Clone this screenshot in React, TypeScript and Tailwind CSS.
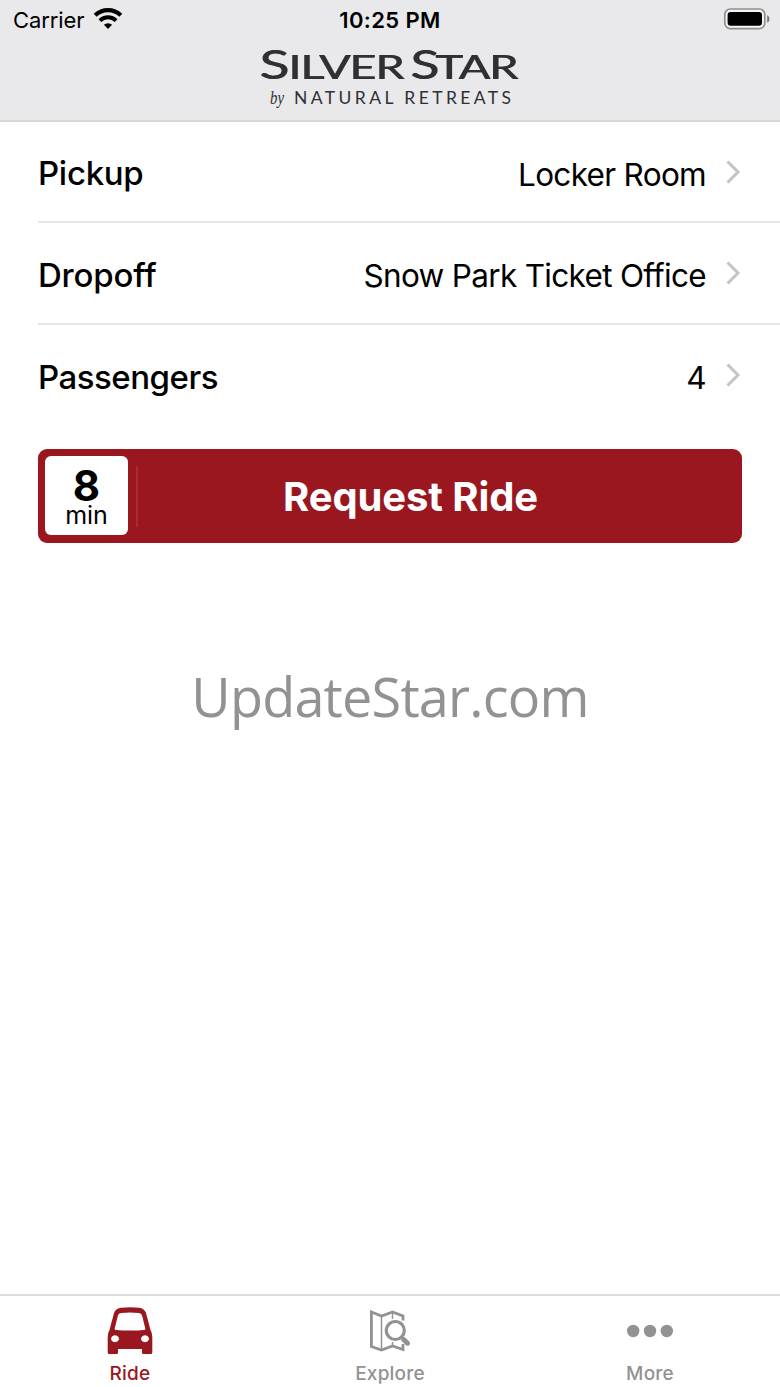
import React, { useState } from 'react';

const rows = [
  { label: 'Pickup', value: 'Locker Room', rowClass: 'h-[101px] border-[#e6e6e7]', labelClass: 'tracking-[-0.3px]' },
  { label: 'Dropoff', value: 'Snow Park Ticket Office', rowClass: 'h-[102px] border-[#e6e6e7]', labelClass: 'tracking-[-0.2px]' },
  { label: 'Passengers', value: '4', rowClass: 'h-[102px] border-transparent', labelClass: 'tracking-[-0.5px]' },
];

const WifiIcon = () => (
  <svg className="mb-[3px] ml-[9px] h-[22px] w-[30px]" viewBox="0 0 30 22" fill="none" stroke="#000">
    <path d="M2.200 7.300A18.500 18.500 0 0 1 27.800 7.300" strokeWidth="4.200" />
    <path d="M6.900 12.600A11.500 11.500 0 0 1 23.100 12.600" strokeWidth="4" />
    <path d="M10.900 16.800a6 6 0 0 1 8.200 0L15 21z" fill="#000" stroke="none" />
  </svg>
);

const BatteryIcon = () => (
  <svg className="h-[22px] w-[48px]" viewBox="0 0 48 22">
    <rect x="1.800" y="1" width="40" height="19.600" rx="5.500" fill="#f4f4f5" stroke="#8e8e90" strokeWidth="1.700" />
    <rect x="4.600" y="4" width="34.400" height="13.800" rx="3" fill="#000" />
    <path d="M44.200 7.200c3 .8 3 6.600 0 7.400z" fill="#77777a" />
  </svg>
);

const Logo = () => (
  <svg className="h-[72px] w-[270px]" viewBox="0 0 270 72" fill="#303034" fontFamily="Lato, sans-serif">
    <g className="[filter:drop-shadow(1.4px_0_0_#303034)]" letterSpacing="-0.8">
      <text x="4" y="38" fontSize="40" textLength="29" lengthAdjust="spacingAndGlyphs">S</text>
      <text x="33" y="38" fontSize="33" textLength="115" lengthAdjust="spacingAndGlyphs">ILVER</text>
      <text x="155" y="38" fontSize="40" textLength="28" lengthAdjust="spacingAndGlyphs">S</text>
      <text x="180" y="38" fontSize="33" textLength="82" lengthAdjust="spacingAndGlyphs">TAR</text>
    </g>
    <text x="15" y="62.5" fontSize="18" fontStyle="italic" fontFamily="Liberation Serif, serif" textLength="14" lengthAdjust="spacingAndGlyphs">by</text>
    <text x="39" y="62.500" fontSize="17.500" textLength="217">NATURAL RETREATS</text>
  </svg>
);

const CarIcon = () => (
  <svg className="h-[48px] w-[46px]" viewBox="0 0 46 48">
    <path
      fill="#9b1720"
      fillRule="evenodd"
      d="M14 .8Q23 -.4 32 .8Q37.500 1.500 39 6L43.500 23Q45.300 26 45.300 30V45.500Q45.300 47 43.800 47H36.500Q35 47 35 45.500V42H11V45.500Q11 47 9.500 47H2.200Q.7 47 .7 45.500V30Q.7 26 2.500 23L7 6Q8.500 1.500 14 .8ZM14.500 6Q11.500 6 10.800 9L7.700 21.500Q7.500 23 9 23Q23 24 37 23Q38.500 23 38.300 21.500L35.200 9Q34.500 6 31.500 6Q23 5.200 14.500 6ZM8 28.200a3.900 3.500 0 1 0 .01 0ZM38 28.200a3.900 3.500 0 1 0 .01 0Z"
    />
  </svg>
);

const MapSearchIcon = () => (
  <svg className="h-[42px] w-[42px]" viewBox="0 0 42 42" fill="none" stroke="#929292" strokeWidth="2.800">
    <path d="M34 10.500V6L23.500 2 12.500 6 2.400 2V36.500L12.500 40 23.500 36 34 39.500V34" />
    <path d="M12.500 6V39M23.500 2V9M23.500 32V36" strokeWidth="1.500" />
    <circle cx="26.300" cy="20.500" r="9" strokeWidth="3.200" />
    <path d="M32.700 27.500 34.500 29.300" strokeWidth="3" />
    <path d="M34.800 29.600 38.500 33.200" strokeWidth="5" strokeLinecap="round" />
  </svg>
);

const MoreIcon = () => (
  <svg className="h-[14px] w-[46px]" viewBox="0 0 46 14" fill="#929292">
    <circle cx="6.200" cy="7" r="6.200" />
    <circle cx="23" cy="7" r="6.200" />
    <circle cx="39.800" cy="7" r="6.200" />
  </svg>
);

const tabs = [
  { id: 'ride', name: 'Ride', icon: <CarIcon /> },
  { id: 'explore', name: 'Explore', icon: <MapSearchIcon /> },
  { id: 'more', name: 'More', icon: <MoreIcon /> },
];

const App = () => {
  const [activeTab, setActiveTab] = useState('ride');

  return (
    <div className="flex h-[1387px] w-[780px] flex-col overflow-hidden bg-white font-[Inter,sans-serif] text-black">
      {/* Status bar and logo */}
      <header className="h-[122px] shrink-0 border-b-2 border-[#d8d8da] bg-[#e9e9eb]">
        <div className="grid h-[41px] grid-cols-3 items-center">
          <div className="flex items-center pl-[13px]">
            <span className="text-[22px] tracking-[-0.1px]">Carrier</span>
            <WifiIcon />
          </div>
          <span className="text-center text-[22px] font-semibold tracking-[0.4px]">10:25 PM</span>
          <div className="flex justify-end pr-[9px] pb-[3px]">
            <BatteryIcon />
          </div>
        </div>
        <div className="flex justify-center">
          <Logo />
        </div>
      </header>

      {/* Ride options */}
      <main className="flex-1">
        <div className="pl-[38px]">
          {rows.map((row) => (
            <button key={row.label} className={`flex w-full items-center border-b-2 pr-[39px] ${row.rowClass}`}>
              <span className={`pt-[5px] text-[33px] font-medium ${row.labelClass}`}>{row.label}</span>
              <span className="ml-auto pt-[6px] text-[31.500px] tracking-[-0.69px]">{row.value}</span>
              <svg className="ml-[19px] h-6 w-4" viewBox="0 0 16 24" fill="none" stroke="#c4c4c7" strokeWidth="3">
                <path d="M2.500 1.500 13 12 2.500 22.500" />
              </svg>
            </button>
          ))}
        </div>

        <button className="mx-[38px] mt-[22px] flex h-[94px] w-[704px] items-center rounded-[9px] bg-[#9a1720] pl-[7px]">
          <span className="mb-px flex h-[79px] w-[83px] flex-col items-center rounded-[6px] bg-white pt-[9px]">
            <span className="text-[42px] leading-[42px] font-bold">8</span>
            <span className="text-[25px] leading-[17px]">min</span>
          </span>
          <span className="ml-2 h-[61px] w-[2px] bg-[#a62c33]" />
          <span className="w-[545px] pt-[2px] text-center text-[40px] font-bold tracking-[-0.1px] text-white">Request Ride</span>
        </button>

        <p className="mt-[115px] text-center font-['Open_Sans',sans-serif] text-[54px] leading-[76px] tracking-[-0.8px] text-[#929292]">
          UpdateStar.com
        </p>
      </main>

      {/* Tab bar */}
      <nav className="grid h-[93px] shrink-0 grid-cols-3 border-t-2 border-[#dcdcdd]">
        {tabs.map((tab) => (
          <button
            key={tab.id}
            className={`flex flex-col items-center ${activeTab === tab.id ? 'text-[#9a1720]' : 'text-[#929292]'}`}
            onClick={() => setActiveTab(tab.id)}
          >
            <span className="flex h-[69px] items-center">{tab.icon}</span>
            <span className="text-[19px] leading-[18px] font-medium tracking-[0.2px]">{tab.name}</span>
          </button>
        ))}
      </nav>
    </div>
  );
};

export default App;
